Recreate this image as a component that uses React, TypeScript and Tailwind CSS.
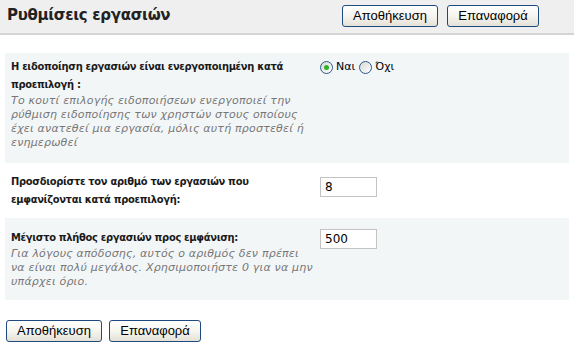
import React from "react";

function XpButton({ label, width }: { label: string; width: string }) {
  return (
    <button
      className={`h-[22px] ${width} rounded-[3px] border border-[#1f4a80] bg-gradient-to-b from-white via-[#f6f5f0] to-[#e4e1d6] font-["Liberation_Sans",Arial,sans-serif] text-[13px] text-black`}
    >
      {label}
    </button>
  );
}

function Radio({ checked }: { checked?: boolean }) {
  return (
    <span className="flex h-[13px] w-[13px] items-center justify-center rounded-full border border-[#2d5a8c] bg-gradient-to-br from-[#d8d8d2] to-white">
      {checked && <span className="h-[5px] w-[5px] rounded-full bg-[#2fb32f]" />}
    </span>
  );
}

function NumberBox({ value }: { value: string }) {
  return (
    <div className="flex h-[20px] w-[57px] items-center border border-[#c3c3c3] bg-white pl-[4px] text-[12px] text-black">
      {value}
    </div>
  );
}

// bold labels are narrower than DejaVu Sans Bold, italic notes slightly wider
const label = 'font-["DejaVu_Sans_Condensed","DejaVu_Sans",sans-serif] font-bold leading-[18px] tracking-[-0.3px]';
const note = "italic leading-[14px] tracking-[0.2px] text-[#777]";

export default function App() {
  return (
    <div className='h-[362px] w-[574px] bg-white font-["DejaVu_Sans",Verdana,sans-serif] text-[#1a1a1a]'>
      <div className="flex h-[35px] items-center justify-between border-b-[2px] border-[#d4d4d4] bg-[#efefef] pb-[2px] pl-[7px] pr-[35px]">
        <h1 className="text-[15px] font-bold tracking-[-0.3px] text-[#222]">Ρυθμίσεις εργασιών</h1>
        <div className="flex gap-[9px]">
          <XpButton label="Αποθήκευση" width="w-[96px]" />
          <XpButton label="Επαναφορά" width="w-[92px]" />
        </div>
      </div>

      <div className="mx-[5px] mt-[18px] text-[11px]">
        <div className="flex bg-[#f3f6f7] pb-[13px] pt-[5px]">
          <div className="w-[305px] pl-[6px]">
            <div className={label}>
              Η ειδοποίηση εργασιών είναι ενεργοποιημένη κατά προεπιλογή :
            </div>
            <div className={note}>
              Το κουτί επιλογής ειδοποιήσεων ενεργοποιεί την ρύθμιση ειδοποίησης των χρηστών στους οποίους έχει ανατεθεί μια εργασία, μόλις αυτή προστεθεί ή ενημερωθεί
            </div>
          </div>
          <div className="ml-[10px] flex h-[18px] items-center gap-[3px] text-[11px] text-black">
            <Radio checked />
            <span className="mr-[1px]">Ναι</span>
            <Radio />
            <span>Όχι</span>
          </div>
        </div>

        <div className="flex pb-[9px] pt-[10px]">
          <div className="w-[305px] pl-[6px]">
            <div className={label}>
              Προσδιορίστε τον αριθμό των εργασιών που εμφανίζονται κατά προεπιλογή:
            </div>
          </div>
          <div className="ml-[10px] pt-[4px]">
            <NumberBox value="8" />
          </div>
        </div>

        <div className="flex bg-[#f3f6f7] pb-[11px] pt-[11px]">
          <div className="w-[305px] pl-[6px]">
            <div className={label}>Μέγιστο πλήθος εργασιών προς εμφάνιση:</div>
            <div className={`${note} whitespace-nowrap`}>
              Για λόγους απόδοσης, αυτός ο αριθμός δεν πρέπει
              <br />
              να είναι πολύ μεγάλος. Χρησιμοποιήστε 0 για να μην
              <br />
              υπάρχει όριο.
            </div>
          </div>
          <div className="ml-[10px]">
            <NumberBox value="500" />
          </div>
        </div>
      </div>

      <div className="ml-[6px] mt-[20px] flex gap-[7px]">
        <XpButton label="Αποθήκευση" width="w-[96px]" />
        <XpButton label="Επαναφορά" width="w-[92px]" />
      </div>
    </div>
  );
}
